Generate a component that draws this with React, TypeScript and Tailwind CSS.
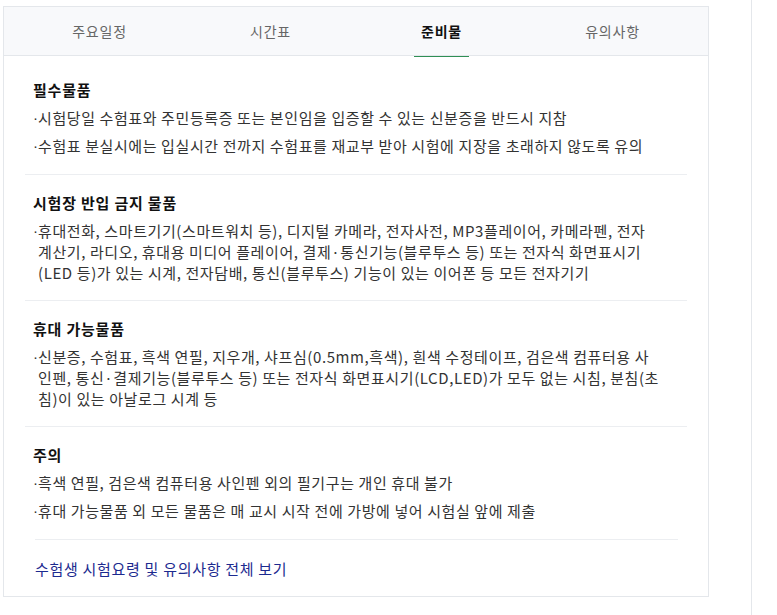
import { useState } from 'react'

type Section = {
  title: string
  // each item is a list of visual lines; the first one carries the bullet
  items: string[][]
}

const TABS = ['주요일정', '시간표', '준비물', '유의사항']

const SECTIONS: Section[] = [
  {
    title: '필수물품',
    items: [
      ['시험당일 수험표와 주민등록증 또는 본인임을 입증할 수 있는 신분증을 반드시 지참'],
      ['수험표 분실시에는 입실시간 전까지 수험표를 재교부 받아 시험에 지장을 초래하지 않도록 유의'],
    ],
  },
  {
    title: '시험장 반입 금지 물품',
    items: [
      [
        '휴대전화, 스마트기기(스마트워치 등), 디지털 카메라, 전자사전, MP3플레이어, 카메라펜, 전자',
        '계산기, 라디오, 휴대용 미디어 플레이어, 결제·통신기능(블루투스 등) 또는 전자식 화면표시기',
        '(LED 등)가 있는 시계, 전자담배, 통신(블루투스) 기능이 있는 이어폰 등 모든 전자기기',
      ],
    ],
  },
  {
    title: '휴대 가능물품',
    items: [
      [
        '신분증, 수험표, 흑색 연필, 지우개, 샤프심(0.5mm,흑색), 흰색 수정테이프, 검은색 컴퓨터용 사',
        '인펜, 통신·결제기능(블루투스 등) 또는 전자식 화면표시기(LCD,LED)가 모두 없는 시침, 분침(초',
        '침)이 있는 아날로그 시계 등',
      ],
    ],
  },
  {
    title: '주의',
    items: [
      ['흑색 연필, 검은색 컴퓨터용 사인펜 외의 필기구는 개인 휴대 불가'],
      ['휴대 가능물품 외 모든 물품은 매 교시 시작 전에 가방에 넣어 시험실 앞에 제출'],
    ],
  },
]

function Item({ lines }: { lines: string[] }) {
  const wrapped = lines.length > 1
  return (
    <li className={`flex whitespace-nowrap ${wrapped ? 'leading-[21px]' : 'leading-[22px]'}`}>
      <span className="w-[5px] shrink-0 tracking-normal font-['Liberation_Sans',sans-serif]">·</span>
      <span>
        {lines.map((l, i) => (
          <span key={i} className="block">{l}</span>
        ))}
      </span>
    </li>
  )
}

export default function App() {
  const [active, setActive] = useState(2)

  return (
    <div className="flex w-[777px] h-[615px] bg-white font-['Noto_Sans_CJK_KR','Noto_Sans',sans-serif]">
      <div className="ml-[3px] mt-[6px] w-[706px] self-start border border-[#e4e7eb]">
        {/* Tabs */}
        <div className="grid grid-cols-4 h-[49px] px-[10px] bg-[#f8f9fb] border-b border-[#e4e7eb]">
          {TABS.map((t, i) => (
            <button
              key={t}
              onClick={() => setActive(i)}
              className="flex justify-center"
            >
              <span
                className={`relative flex items-center h-[49px] px-[7px] text-[14px] tracking-[0.8px] ${
                  i === active ? 'font-bold text-[#111]' : 'text-[#666]'
                }`}
              >
                {t}
                {i === active && (
                  <span className="absolute left-0 right-0 bottom-[-1px] h-px bg-[#2f8f55]" />
                )}
              </span>
            </button>
          ))}
        </div>

        {/* Sections */}
        <div className="pt-[6px] px-[21px] tracking-[0.6px]">
          {SECTIONS.map((s, i) => (
            <div
              key={s.title}
              className={`pl-[8px] pt-[17px] pb-[17px] ${i > 0 ? 'border-t border-[#eceef1]' : ''}`}
            >
              <h3 className="text-[15px] leading-[22px] font-bold text-[#111] mb-[6px] tracking-[0.8px]">{s.title}</h3>
              <ul className="flex flex-col gap-[6px] text-[15px] text-[#333]">
                {s.items.map((lines, j) => (
                  <Item key={j} lines={lines} />
                ))}
              </ul>
            </div>
          ))}
        </div>

        <div className="ml-[31px] mr-[30px] border-t border-[#eceef1] pt-[16px] pb-[16px]">
          <a href="#" className="text-[15px] leading-[22px] tracking-[0.7px] text-[#1c2a8f]">
            수험생 시험요령 및 유의사항 전체 보기
          </a>
        </div>
      </div>

      <div className="ml-[42px] h-full border-l border-[#e4e7eb]" />
    </div>
  )
}
